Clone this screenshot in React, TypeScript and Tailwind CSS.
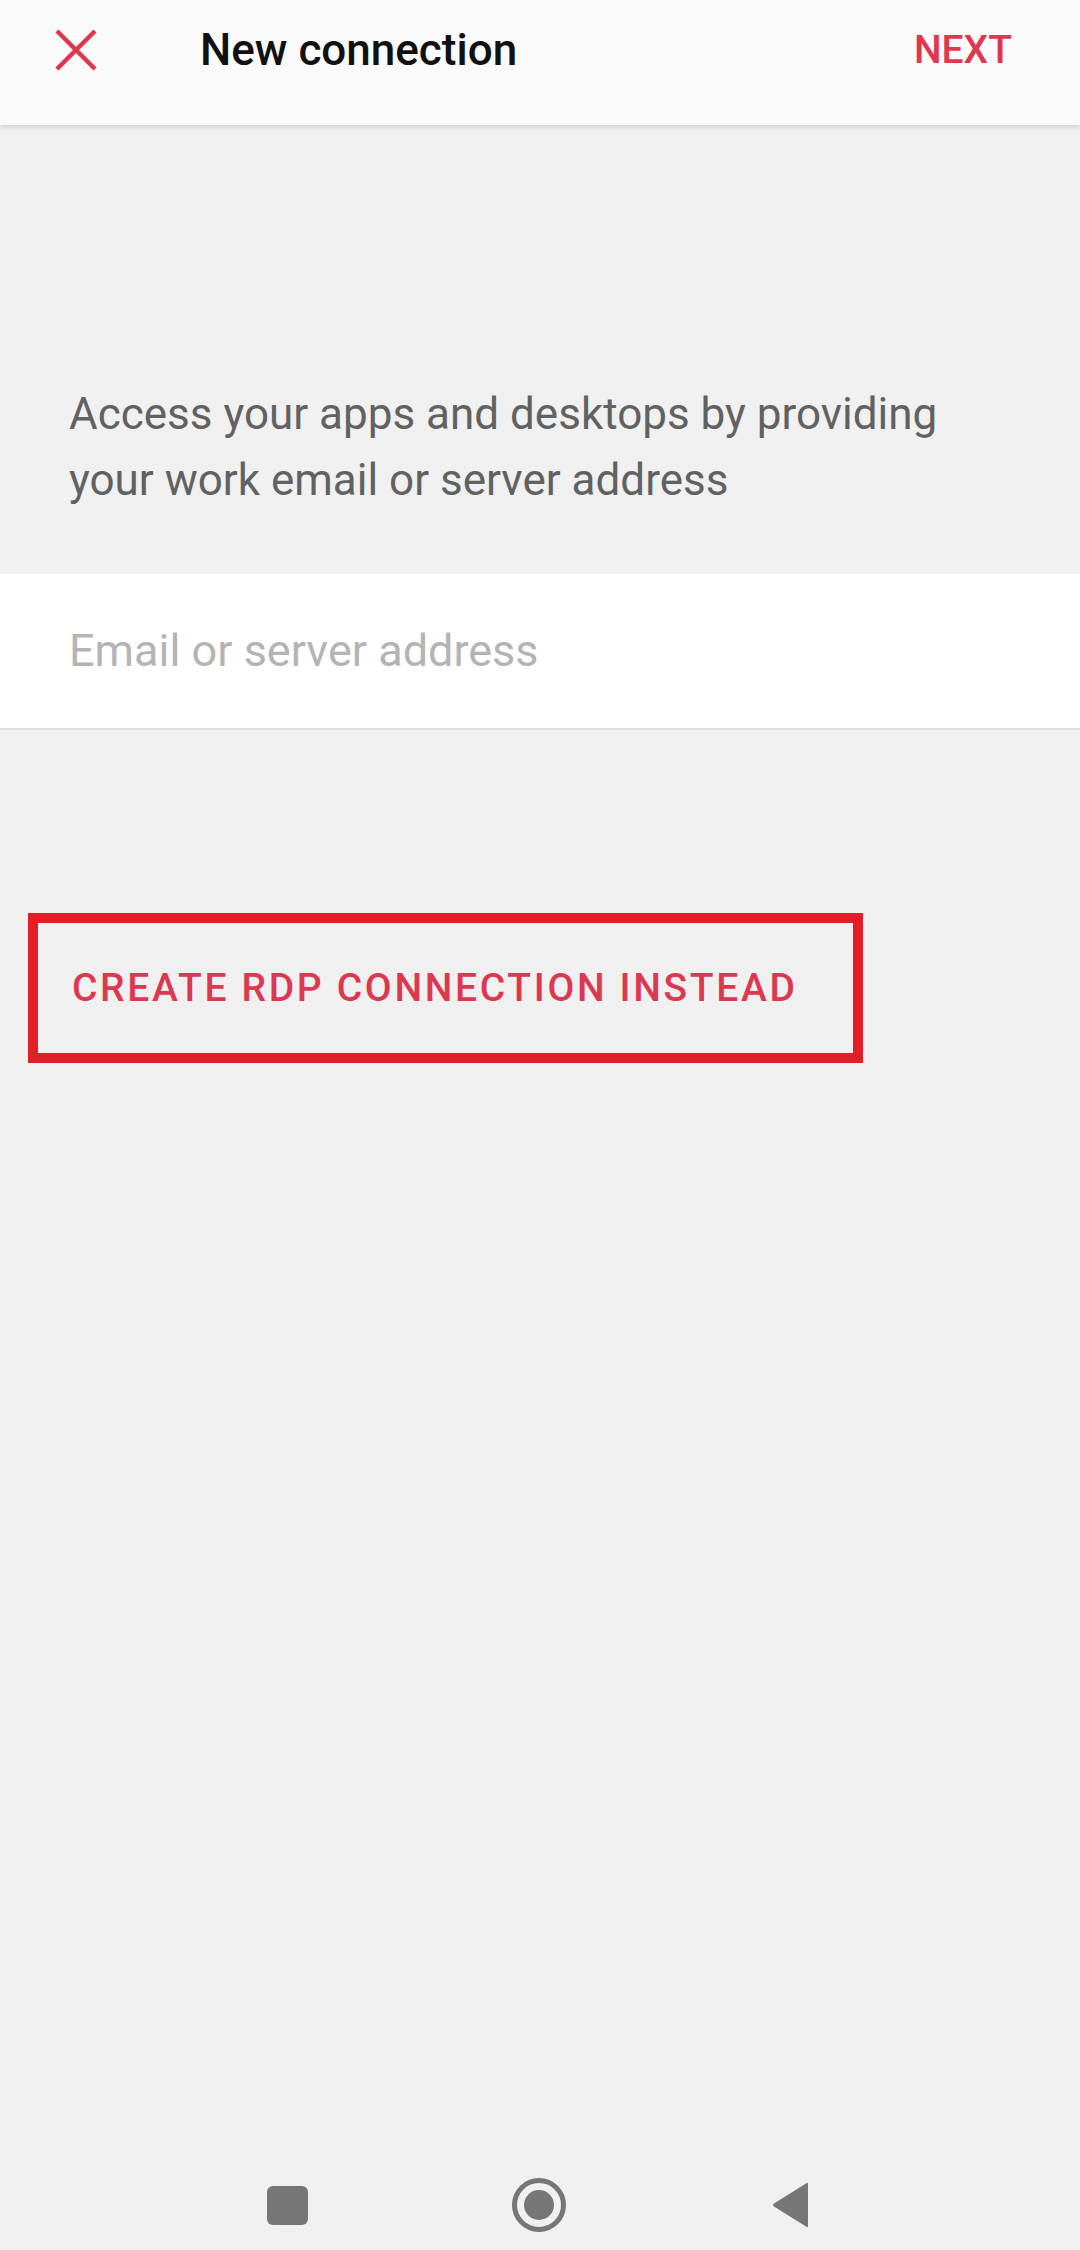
import React from 'react';

const font = { fontFamily: 'Roboto, "Noto Sans", sans-serif' };

function CloseIcon() {
  return (
    <svg width="44" height="44" viewBox="0 0 44 44" className="text-[#e0364e]">
      <path d="M3 3 L41 41 M41 3 L3 41" stroke="currentColor" strokeWidth="4.5" fill="none" />
    </svg>
  );
}

function NavBar() {
  return (
    <div className="flex h-[90px] items-center">
      <div className="ml-[267px] h-[39px] w-[41px] rounded-[6px] bg-[#767676]" />
      <div className="ml-[204px] flex h-[54px] w-[54px] items-center justify-center rounded-full border-[5px] border-[#767676]">
        <div className="h-[30px] w-[30px] rounded-full bg-[#767676]" />
      </div>
      <svg className="ml-[206px]" width="38" height="46" viewBox="0 0 38 46">
        <path d="M36 2 L36 44 Q36 46 34 44.5 L2 24.5 Q0 23 2 21.5 L34 1.5 Q36 0 36 2 Z" fill="#767676" />
      </svg>
    </div>
  );
}

export default function App() {
  return (
    <div className="flex min-h-screen flex-col bg-[#f0f0f0]" style={font}>
      <header className="relative z-10 h-[125px] bg-[#fafafa] shadow-[0_2px_5px_rgba(0,0,0,0.14)]">
        <div className="flex h-[100px] items-center">
          <div className="ml-[54px] flex items-center">
            <CloseIcon />
          </div>
          <h1 className="ml-[102px] text-[44px] font-medium text-[#111]">New connection</h1>
          <button className="ml-auto mr-[68px] text-[39px] font-medium text-[#e0364e]">NEXT</button>
        </div>
      </header>

      <p className="mt-[256px] px-[69px] text-[44px] leading-[66px] text-[#616161]">
        Access your apps and desktops by providing your work email or server address
      </p>

      <div className="mt-[61px] flex h-[156px] items-center border-b-2 border-[#dcdcdc] bg-white px-[69px]">
        <span className="text-[45px] text-[#b4b4b4]">Email or server address</span>
      </div>

      <div className="mt-[183px] ml-[28px] flex h-[150px] w-[835px] items-center border-[10px] border-[#e41e27] pl-[34px]">
        <span className="text-[39px] font-medium tracking-[0.068em] text-[#dc3850]">CREATE RDP CONNECTION INSTEAD</span>
      </div>

      <div className="flex-1" />
      <NavBar />
    </div>
  );
}
